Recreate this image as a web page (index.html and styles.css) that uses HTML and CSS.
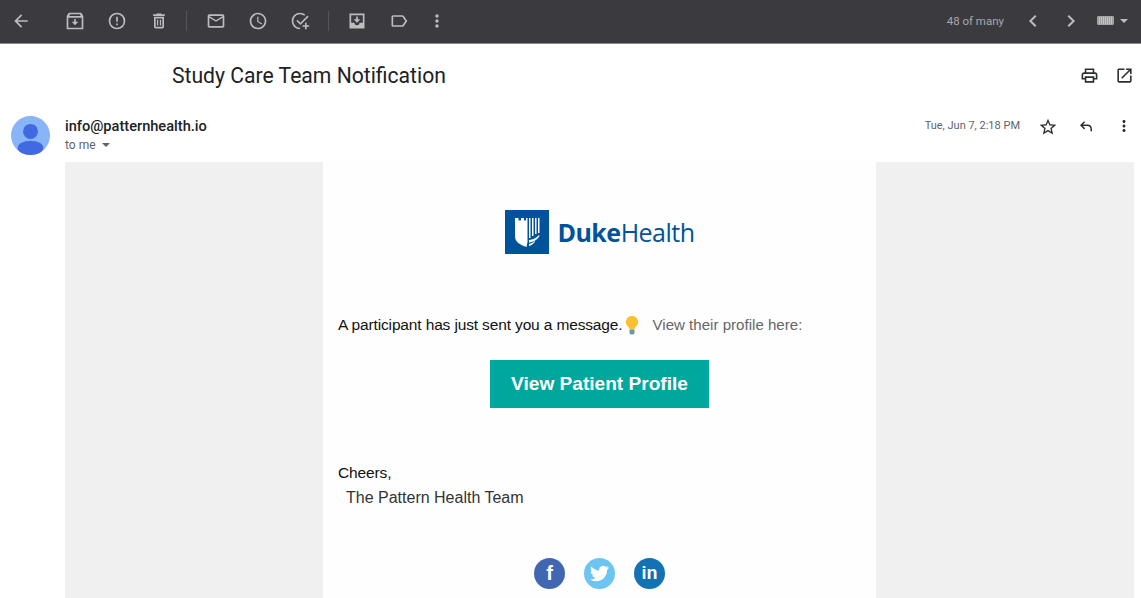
FILE: index.html
```html
<!DOCTYPE html>
<html lang="en">
<head>
<meta charset="utf-8">
<title>Study Care Team Notification</title>
<link rel="stylesheet" href="styles.css">
</head>
<body>
<header class="toolbar">
  <span class="tool back"><svg viewBox="0 0 24 24"><path d="M20 11H7.830l5.590-5.590L12 4l-8 8 8 8 1.410-1.410L7.830 13H20v-2z"/></svg></span>
  <span class="tool"><svg viewBox="0 0 24 24"><path d="M4.500 2h15L22 6v16H2V6zM4 8v12h16V8zM5.200 6h13.600l-.9-2H6.100zM11 9.500h2V13h3l-4 4-4-4h3z" fill-rule="evenodd"/></svg></span>
  <span class="tool"><svg viewBox="0 0 24 24"><path d="M12 2a10 10 0 1 0 0 20 10 10 0 0 0 0-20zm0 18a8 8 0 1 1 0-16 8 8 0 0 1 0 16zM11 7h2v6h-2zm0 8h2v2h-2z"/></svg></span>
  <span class="tool"><svg viewBox="0 0 24 24"><path d="M6 19c0 1.100.9 2 2 2h8c1.100 0 2-.9 2-2V7H6v12zM8 9h8v10H8V9zm7.500-5l-1-1h-5l-1 1H5v2h14V4zM9.500 10.500h1.500v7H9.500zm3.500 0h1.500v7H13z"/></svg></span>
  <span class="divider first"></span>
  <span class="tool"><svg viewBox="0 0 24 24"><path d="M20 4H4c-1.100 0-2 .9-2 2v12c0 1.100.9 2 2 2h16c1.100 0 2-.9 2-2V6c0-1.100-.9-2-2-2zm0 14H4V8l8 5 8-5v10zm-8-7L4 6h16l-8 5z"/></svg></span>
  <span class="tool"><svg viewBox="0 0 24 24"><path d="M11.990 2C6.470 2 2 6.480 2 12s4.470 10 9.990 10C17.520 22 22 17.520 22 12S17.520 2 11.990 2zM12 20c-4.420 0-8-3.580-8-8s3.580-8 8-8 8 3.580 8 8-3.580 8-8 8zm.5-13H11v6l5.250 3.150.75-1.230-4.500-2.670z"/></svg></span>
  <span class="tool"><svg viewBox="0 0 24 24"><path d="M12 2a10 10 0 0 1 6.500 2.400l-1.400 1.400A8 8 0 1 0 12 20v2a10 10 0 0 1 0-20zm9 3.500l1.400 1.400L12.500 16.800 7.600 11.900 9 10.500l3.500 3.500zM18 14h2v3h3v2h-3v3h-2v-3h-3v-2h3z"/></svg></span>
  <span class="divider"></span>
  <span class="tool"><svg viewBox="0 0 24 24"><path d="M3 3h18v18H3zm2 2v9h4a3 3 0 0 0 6 0h4V5zM11 6.500h2V10h3l-4 4-4-4h3z" fill-rule="evenodd"/></svg></span>
  <span class="tool"><svg viewBox="0 0 24 24"><path d="M17.630 5.840C17.270 5.330 16.670 5 16 5L5 5.010C3.900 5.010 3 5.900 3 7v10c0 1.100.9 1.990 2 1.990L16 19c.67 0 1.270-.33 1.630-.84L22 12l-4.370-6.160zM16 17H5V7h11l3.550 5L16 17z"/></svg></span>
  <span class="tool narrow"><svg viewBox="0 0 24 24"><path d="M12 8c1.100 0 2-.9 2-2s-.9-2-2-2-2 .9-2 2 .9 2 2 2zm0 2c-1.100 0-2 .9-2 2s.9 2 2 2 2-.9 2-2-.9-2-2-2zm0 6c-1.100 0-2 .9-2 2s.9 2 2 2 2-.9 2-2-.9-2-2-2z"/></svg></span>
  <span class="pager">48 of many</span>
  <span class="tool chevron"><svg viewBox="0 0 24 24"><path d="M15.410 7.410L14 6l-6 6 6 6 1.410-1.410L10.830 12z"/></svg></span>
  <span class="tool chevron"><svg viewBox="0 0 24 24"><path d="M10 6L8.590 7.410 13.170 12l-4.580 4.590L10 18l6-6z"/></svg></span>
  <span class="keyboard"><span class="keys"></span><span class="caret light"></span></span>
</header>

<div class="subject-row">
  <h1 class="subject">Study Care Team Notification</h1>
  <div class="subject-actions">
    <svg class="icon" viewBox="0 0 24 24"><path d="M19 8h-1V3H6v5H5c-1.660 0-3 1.340-3 3v6h4v4h12v-4h4v-6c0-1.660-1.340-3-3-3zM8 5h8v3H8V5zm8 12v2H8v-4h8v2zm2-2v-2H6v2H4v-4c0-.55.45-1 1-1h14c.55 0 1 .45 1 1v4h-2z"/></svg>
    <svg class="icon" viewBox="0 0 24 24"><path d="M19 19H5V5h7V3H5c-1.110 0-2 .9-2 2v14c0 1.100.89 2 2 2h14c1.100 0 2-.9 2-2v-7h-2v7zM14 3v2h3.590l-9.830 9.830 1.410 1.410L19 6.410V10h2V3h-7z"/></svg>
  </div>
</div>

<div class="sender-row">
  <svg class="avatar" viewBox="0 0 38 38">
    <circle cx="19" cy="19" r="19" fill="#8ab4f8"/>
    <circle cx="19" cy="15" r="7.300" fill="#4169e1"/>
    <ellipse cx="19" cy="31" rx="12.500" ry="7" fill="#4169e1"/>
  </svg>
  <div class="sender">
    <div class="sender-name">info@patternhealth.io</div>
    <div class="recipient">to me <span class="caret"></span></div>
  </div>
  <div class="meta">
    <span class="date">Tue, Jun 7, 2:18 PM</span>
    <svg class="icon star" viewBox="0 0 24 24"><path d="M22 9.240l-7.190-.62L12 2 9.190 8.630 2 9.240l5.460 4.730L5.820 21 12 17.270 18.180 21l-1.630-7.030L22 9.240zM12 15.400l-3.760 2.270 1-4.280-3.320-2.880 4.380-.38L12 6.100l1.710 4.040 4.380.38-3.320 2.880 1 4.280L12 15.400z"/></svg>
    <svg class="icon reply" viewBox="0 0 24 24"><path d="M9.500 5.500L4 11l5.500 5.500 1.400-1.400L7.800 12H14c2.800 0 4 1.700 4 5v2h2v-2c0-4.500-2-7-6-7H7.800l3.100-3.100z"/></svg>
    <svg class="icon more" viewBox="0 0 24 24"><path d="M12 8c1.100 0 2-.9 2-2s-.9-2-2-2-2 .9-2 2 .9 2 2 2zm0 2c-1.100 0-2 .9-2 2s.9 2 2 2 2-.9 2-2-.9-2-2-2zm0 6c-1.100 0-2 .9-2 2s.9 2 2 2 2-.9 2-2-.9-2-2-2z"/></svg>
  </div>
</div>

<main class="mail-frame">
  <article class="mail-card">
    <div class="brand">
      <svg class="shield" viewBox="0 0 44 44">
        <rect width="44" height="44" fill="#00539b"/>
        <path d="M10 8h3.500v2.500h2.500V8h3v2.500h2V8h1.500v24l-1 5C14 34.500 10 31.500 10 26z" fill="#fff"/>
        <path d="M24 8h1.500v20H24zM27 8h1.500v18H27zM30 8h1.500v16H30zM33 8h1.500v15H33zM24 30c4-.5 7.500-2 10-5l.5 1c-2 3.500-6 6-10.500 6.500zM24 34c2-.5 4-1.500 6-3l-.5 1.500c-1.500 1.500-3.500 3-5.500 3.500z" fill="#fff"/>
      </svg>
      <span class="wordmark"><b>Duke</b>Health</span>
    </div>
    <p class="lead">A participant has just sent you a message.<svg class="bulb" viewBox="0 0 16 20"><path d="M8 1a6 6 0 0 0-3.500 10.900c.8.7 1 1.600 1 2.600h5c0-1 .2-1.900 1-2.600A6 6 0 0 0 8 1z" fill="#fbc02d"/><path d="M5.500 14.500h5V18l-1 1.500h-3L5.500 18z" fill="#6b9aa5"/></svg><span class="lead-muted">View their profile here:</span></p>
    <div class="cta-wrap"><a class="cta">View Patient Profile</a></div>
    <p class="cheers">Cheers,</p>
    <p class="team">The Pattern Health Team</p>
    <div class="social">
      <span class="badge fb">f</span>
      <span class="badge tw"><svg viewBox="0 0 24 24"><path d="M23.953 4.570a10 10 0 0 1-2.825.775 4.958 4.958 0 0 0 2.163-2.723c-.951.555-2.005.959-3.127 1.184a4.920 4.920 0 0 0-8.384 4.482C7.690 8.095 4.067 6.130 1.640 3.162a4.822 4.822 0 0 0-.666 2.475c0 1.710.87 3.213 2.188 4.096a4.904 4.904 0 0 1-2.228-.616v.06a4.923 4.923 0 0 0 3.946 4.827 4.996 4.996 0 0 1-2.212.085 4.936 4.936 0 0 0 4.604 3.417 9.867 9.867 0 0 1-6.102 2.105c-.39 0-.779-.023-1.170-.067a13.995 13.995 0 0 0 7.557 2.209c9.053 0 13.998-7.496 13.998-13.985 0-.21 0-.42-.015-.63A9.935 9.935 0 0 0 24 4.590z"/></svg></span>
      <span class="badge li">in</span>
    </div>
  </article>
</main>
</body>
</html>
```
FILE: styles.css
```css
* { box-sizing: border-box; }
html, body { margin: 0; height: 598px; overflow: hidden; background: #fff; }
body { font-family: Roboto, "Liberation Sans", sans-serif; color: #202124; }

.toolbar {
  height: 44px;
  display: flex;
  align-items: center;
  padding-bottom: 2px;
  background: #3a3a3f;
  border-bottom: 1px solid #8b8b8e;
}
.tool { width: 42px; height: 42px; display: flex; align-items: center; justify-content: center; flex: none; }
.tool svg { width: 20px; height: 20px; fill: #bdbdc0; }
.tool.back { margin-right: 12px; }
.tool.narrow { width: 34px; }
.tool.chevron { width: 38px; }
.tool.chevron svg { width: 24px; height: 24px; }
.divider { width: 1px; height: 20px; background: #55555a; margin: 0 7px; flex: none; }
.divider.first { margin: 0 8px 0 6px; }
.pager { margin-left: auto; font-size: 11.500px; color: #a9a9ac; margin-right: 10px; }
.keyboard { display: flex; align-items: center; gap: 6px; margin: 0 13px 0 7px; }
.keys { width: 17px; height: 9px; background: repeating-linear-gradient(90deg, #9c9c9f 0 1px, #c4c4c7 1px 2px); border-radius: 1px; border: 1px solid #a5a5a8; }
.caret { display: inline-block; width: 0; height: 0; border-left: 4px solid transparent; border-right: 4px solid transparent; border-top: 4px solid #5f6368; }
.caret.light { border-top-color: #bdbdc0; }

.subject-row { height: 63px; display: flex; align-items: center; padding: 0 7px 0 172px; justify-content: space-between; }
.subject { margin: 0; font-size: 21.150px; font-weight: 400; line-height: 28px; color: #202124; }
.subject-actions { display: flex; gap: 16px; }
.icon { width: 18px; height: 18px; fill: #2b2e31; display: block; flex: none; }
.subject-actions .icon { width: 19px; height: 19px; }

.sender-row { height: 55px; display: flex; padding: 9px 0 0 11px; }
.avatar { width: 39px; height: 39px; flex: none; }
.sender { margin-left: 15px; padding-top: 1px; }
.sender-name { font-size: 14.600px; font-weight: 500; line-height: 18px; color: #202124; }
.recipient { font-size: 12px; line-height: 18px; color: #5f6368; margin-top: 1px; }
.recipient .caret { margin-left: 3px; vertical-align: 2px; }
.meta { margin-left: auto; display: flex; align-items: flex-start; padding: 1px 8px 0 0; }
.date { font-size: 11px; line-height: 18px; color: #5f6368; margin-right: 18px; }
.star { width: 20px; height: 20px; margin-right: 19px; }
.reply { width: 18px; height: 18px; margin-right: 20px; }
.more { width: 18px; height: 18px; }

.mail-frame { margin: 0 7px 0 65px; height: 436px; background: #f0f0f0; display: flex; overflow: hidden; }
.mail-card { width: 553px; margin-left: 258px; background: #fefefe; padding: 48px 15px 0; font-family: "Liberation Sans", Arial, sans-serif; }

.brand { display: flex; align-items: center; justify-content: center; gap: 8px; padding-left: 1px; height: 44px; }
.shield { width: 44px; height: 44px; flex: none; }
.wordmark { font-family: "Open Sans", sans-serif; font-size: 25px; color: #00539b; letter-spacing: -.5px; }
.wordmark b { font-weight: 700; }

.lead { margin: 59px 0 0; font-size: 15.500px; letter-spacing: -.14px; line-height: 24px; color: #111; display: flex; align-items: center; white-space: nowrap; }
.bulb { width: 16px; height: 20px; flex: none; margin: 0 12px 0 2px; }
.lead-muted { color: #666; font-size: 15.100px; letter-spacing: 0; }

.cta-wrap { display: flex; justify-content: center; margin-top: 23px; }
.cta { width: 219px; height: 48px; background: #00a79d; color: #fff; font-size: 19.100px; font-weight: 700; display: flex; align-items: center; justify-content: center; }

.cheers { margin: 53px 0 0; font-size: 15.500px; letter-spacing: -.14px; line-height: 24px; color: #111; }
.team { margin: 1px 0 0 8px; font-size: 16px; line-height: 24px; color: #333; }

.social { display: flex; justify-content: center; gap: 19px; margin-top: 48px; }
.badge { width: 31px; height: 31px; border-radius: 50%; display: flex; align-items: center; justify-content: center; color: #fff; font-weight: 700; }
.badge.fb { background: #4267b2; font-size: 20px; }
.badge.tw { background: #6cc5f1; }
.badge.tw svg { width: 19px; height: 19px; fill: #fff; }
.badge.li { background: #1272b4; font-size: 18px; }
```
